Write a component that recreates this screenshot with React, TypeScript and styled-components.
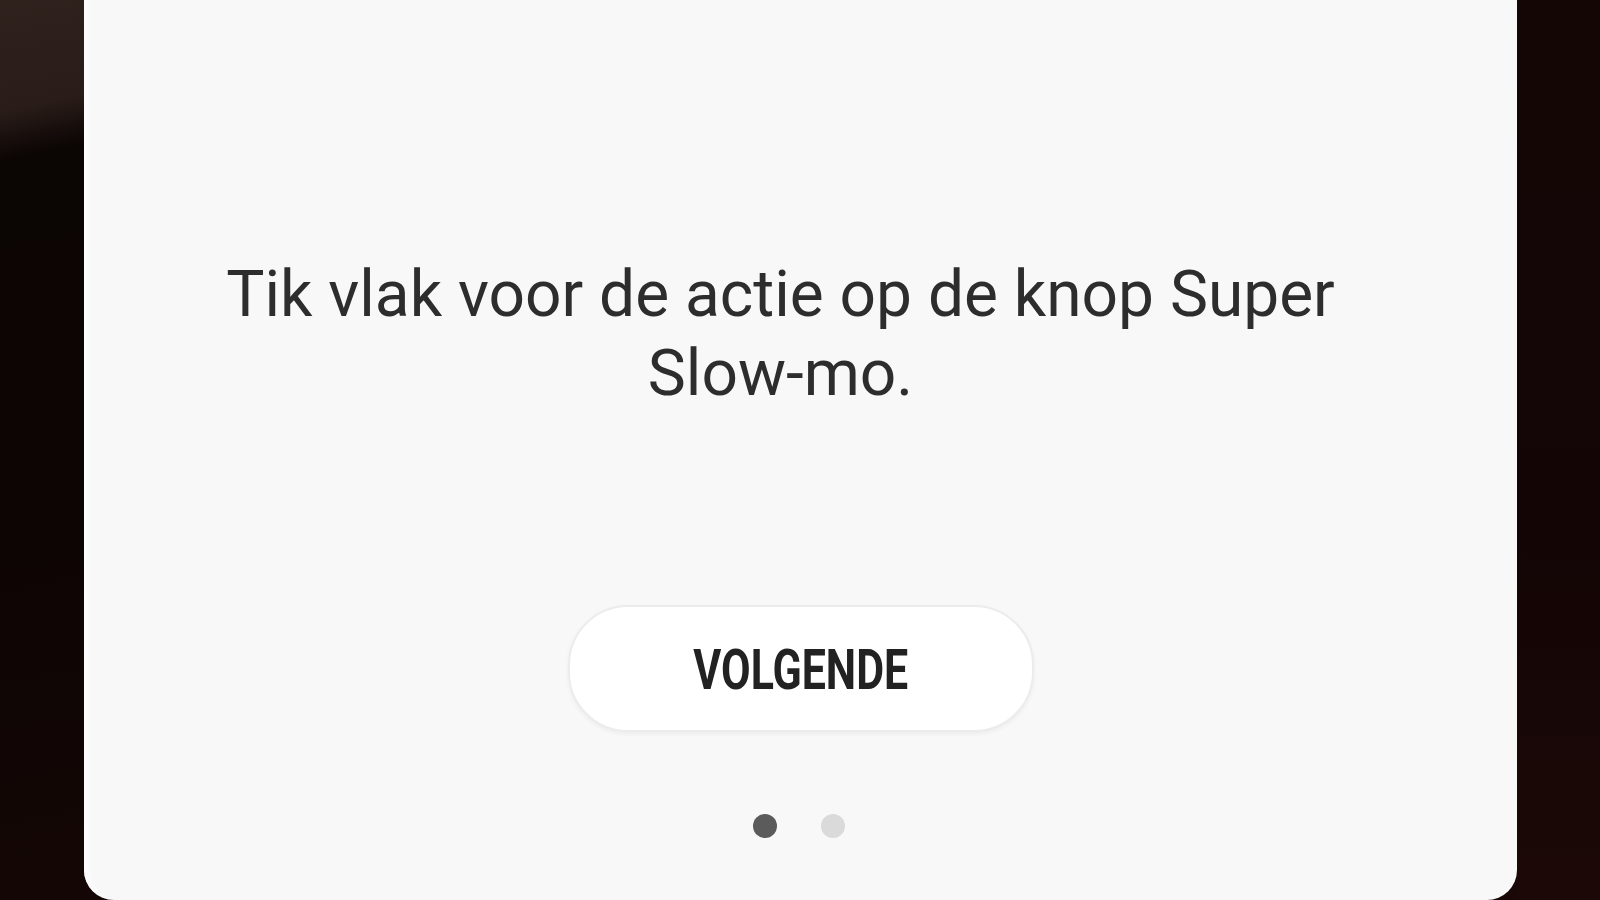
import React from "react";
import styled, { createGlobalStyle } from "styled-components";

const GlobalStyle = createGlobalStyle`
  html, body {
    margin: 0;
    padding: 0;
    width: 1600px;
    height: 900px;
    overflow: hidden;
  }
  body {
    font-family: Roboto, "Noto Sans", sans-serif;
    background: linear-gradient(168deg, #2f221d 0%, #2a1d19 9%, #0b0504 13%, #0d0504 45%, #1a0806 100%);
  }
`;

const Screen = styled.div`
  width: 1600px;
  height: 900px;
  display: flex;
`;

const LeftEdge = styled.div`
  width: 84px;
  flex-shrink: 0;
`;

const RightEdge = styled.div`
  flex: 1;
  background: linear-gradient(180deg, #150606 0%, #130505 60%, #1c0907 100%);
`;

const Card = styled.div`
  width: 1433px;
  height: 900px;
  flex-shrink: 0;
  background: #f8f8f8;
  border-radius: 0 0 30px 30px;
  box-shadow: inset 10px 0 6px -6px #ffffff;
  display: flex;
  flex-direction: column;
  align-items: center;
`;

const Message = styled.p`
  margin: 255px 0 0;
  width: 1180px;
  padding-right: 40px;
  text-align: center;
  font-size: 64px;
  line-height: 79px;
  color: #2d2d2d;
`;

const NextButton = styled.button`
  margin-top: 192px;
  width: 466px;
  height: 127px;
  border-radius: 60px;
  border: 2px solid #ececec;
  background: #ffffff;
  box-shadow: 0 2px 4px rgba(0, 0, 0, 0.05);
  display: flex;
  align-items: center;
  justify-content: center;
  cursor: pointer;
  padding: 0;
`;

const ButtonLabel = styled.span`
  display: inline-block;
  font-family: Roboto, sans-serif;
  font-weight: 700;
  font-size: 55px;
  color: #222222;
  transform: scaleX(0.78);
  margin-top: 2px;
`;

const Pager = styled.div`
  margin-top: 82px;
  margin-right: 4px;
  display: flex;
  gap: 44px;
`;

const Dot = styled.span<{ $active?: boolean }>`
  width: 24px;
  height: 24px;
  border-radius: 50%;
  background: ${p => (p.$active ? "#5b5b5b" : "#dadada")};
`;

export default function App() {
  return (
    <>
      <GlobalStyle />
      <Screen>
        <LeftEdge />
        <Card>
          <Message>Tik vlak voor de actie op de knop Super Slow-mo.</Message>
          <NextButton>
            <ButtonLabel>VOLGENDE</ButtonLabel>
          </NextButton>
          <Pager>
            <Dot $active />
            <Dot />
          </Pager>
        </Card>
        <RightEdge />
      </Screen>
    </>
  );
}
